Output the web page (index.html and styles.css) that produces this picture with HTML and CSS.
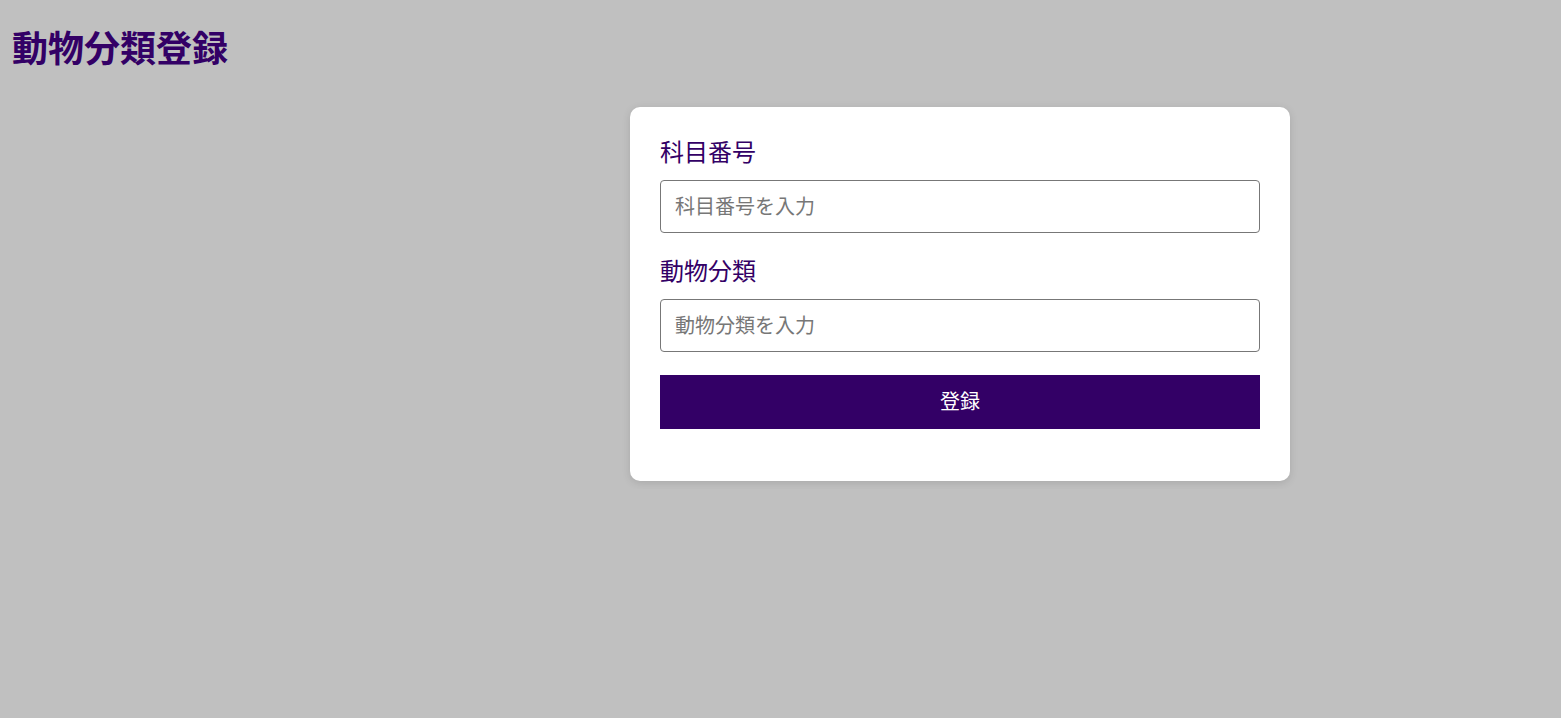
FILE: index.html
```html
<!DOCTYPE html>
<html lang="ja">
<head>
<meta charset="utf-8">
<title>動物分類登録</title>
<link rel="stylesheet" href="styles.css">
</head>
<body>
<h1 class="page-title">動物分類登録</h1>
<main class="layout">
  <form class="card">
    <label class="field-label" for="code">科目番号</label>
    <input class="field-input" id="code" type="text" placeholder="科目番号を入力">
    <label class="field-label" for="kind">動物分類</label>
    <input class="field-input" id="kind" type="text" placeholder="動物分類を入力">
    <button class="submit-btn" type="button">登録</button>
  </form>
</main>
</body>
</html>
```
FILE: styles.css
```css
html, body {
  margin: 0;
  padding: 0;
}
body {
  background: #c0c0c0;
  font-family: "Noto Sans CJK JP", "Noto Sans", sans-serif;
  padding: 8px;
}
.page-title {
  margin: 16px 0 0 4px;
  font-size: 36px;
  line-height: 44px;
  font-weight: 700;
  color: #330066;
}
.layout {
  display: flex;
  padding-left: 622px;
  margin-top: 39px;
}
.card {
  width: 660px;
  box-sizing: border-box;
  background: #fff;
  border-radius: 10px;
  padding: 30px 30px 52px;
  display: flex;
  flex-direction: column;
  box-shadow: 0 2px 8px rgba(0, 0, 0, 0.12);
}
.field-label {
  font-size: 24px;
  line-height: 28px;
  color: #330066;
  margin: 0 0 15px;
}
.field-input {
  height: 53px;
  box-sizing: border-box;
  border: 1px solid #777;
  border-radius: 4px;
  padding: 0 14px 3px;
  font-family: inherit;
  font-size: 20px;
  color: #333;
  margin-bottom: 23px;
}
.field-input::placeholder {
  color: #777;
}
.submit-btn {
  height: 54px;
  border: none;
  background: #330066;
  color: #fff;
  font-family: inherit;
  font-size: 20px;
  padding: 0 0 3px;
  margin-top: 0;
}
```
